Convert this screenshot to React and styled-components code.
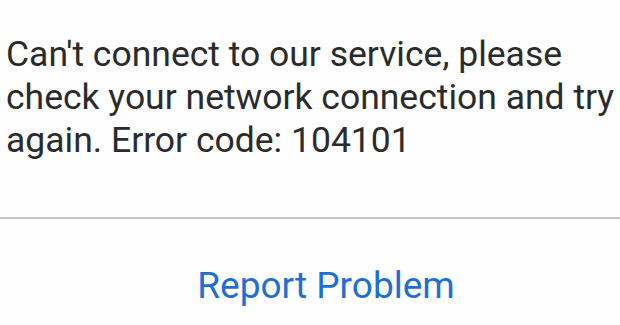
import React from "react";
import styled, { createGlobalStyle } from "styled-components";

const GlobalStyle = createGlobalStyle`
    html, body {
        margin: 0;
        padding: 0;
        background: #fff;
    }
    body {
        font-family: Roboto, "Noto Sans", sans-serif;
    }
`;

const Dialog = styled.div`
    width: 620px;
    height: 325px;
    display: flex;
    flex-direction: column;
    background: #fefefe;
    overflow: hidden;
`;

const Message = styled.p`
    margin: 0;
    padding: 33px 0 0 6px;
    height: 217px;
    box-sizing: border-box;
    font-size: 35.5px;
    line-height: 43px;
    color: #2b2b2b;
`;

const Divider = styled.hr`
    margin: 0;
    border: none;
    height: 2px;
    background: #c4c4c4;
`;

const Actions = styled.div`
    flex: 1;
    display: flex;
    justify-content: center;
    align-items: center;
    padding: 26px 0 0 32px;
`;

const ActionButton = styled.button`
    border: none;
    background: none;
    padding: 0;
    font-family: Roboto, sans-serif;
    font-size: 37px;
    color: #1f6fd8;
    cursor: pointer;
`;

export default function App() {
    return (
        <>
            <GlobalStyle />
            <Dialog>
                <Message>
                    Can't connect to our service, please check your network
                    connection and try again. Error code: 104101
                </Message>
                <Divider />
                <Actions>
                    <ActionButton>Report Problem</ActionButton>
                </Actions>
            </Dialog>
        </>
    );
}
